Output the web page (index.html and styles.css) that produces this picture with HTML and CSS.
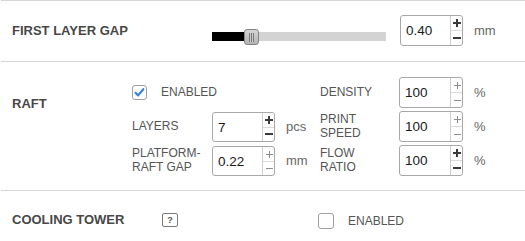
FILE: index.html
```html
<!DOCTYPE html>
<html lang="en">
<head>
    <meta charset="UTF-8">
    <meta name="viewport" content="width=device-width, initial-scale=1.0">
    <title>Print settings</title>
    <link rel="stylesheet" href="styles.css">
</head>
<body>
    <div class="panel">
        <section class="row row-gap">
            <h3 class="title title-wide">FIRST LAYER GAP</h3>
            <div class="slider">
                <div class="slider-fill"></div>
                <div class="slider-thumb"></div>
            </div>
            <div class="spin spin-shift">
                <span class="spin-value">0.40</span>
                <span class="spin-btns dark">
                    <span><svg width="8" height="8"><path d="M4 0v8M0 4h8"/></svg></span>
                    <span><svg width="8" height="8"><path d="M0 4h8"/></svg></span>
                </span>
            </div>
            <span class="unit">mm</span>
        </section>

        <section class="row row-raft">
            <h3 class="title title-raft">RAFT</h3>
            <label class="check check-raft">
                <svg class="box" width="15" height="15" viewBox="0 0 15 15">
                    <rect x="0.5" y="0.5" width="14" height="14" rx="2.5" fill="#fff" stroke="#a0a0a0"/>
                    <path d="M3.5 7.8l2.6 2.6 5.2-6.2" fill="none" stroke="#3584e4" stroke-width="2.2" stroke-linecap="round" stroke-linejoin="round"/>
                </svg>
                <span>ENABLED</span>
            </label>

            <span class="label col-d r1">DENSITY</span>
            <div class="spin col-e r1">
                <span class="spin-value">100</span>
                <span class="spin-btns">
                    <span><svg width="8" height="8"><path d="M4.5 1v7M1 4.5h7"/></svg></span>
                    <span><svg width="8" height="8"><path d="M1 4.5h7"/></svg></span>
                </span>
            </div>
            <span class="unit col-f r1">%</span>

            <span class="label col-a r2">LAYERS</span>
            <div class="spin col-b r2 low">
                <span class="spin-value">7</span>
                <span class="spin-btns dark">
                    <span><svg width="8" height="8"><path d="M4 0v8M0 4h8"/></svg></span>
                    <span><svg width="8" height="8"><path d="M0 4h8"/></svg></span>
                </span>
            </div>
            <span class="unit col-c r2">pcs</span>
            <span class="label col-d r2">PRINT SPEED</span>
            <div class="spin col-e r2">
                <span class="spin-value">100</span>
                <span class="spin-btns">
                    <span><svg width="8" height="8"><path d="M4.5 1v7M1 4.5h7"/></svg></span>
                    <span><svg width="8" height="8"><path d="M1 4.5h7"/></svg></span>
                </span>
            </div>
            <span class="unit col-f r2">%</span>

            <span class="label col-a r3">PLATFORM-RAFT GAP</span>
            <div class="spin col-b r3 low">
                <span class="spin-value">0.22</span>
                <span class="spin-btns">
                    <span><svg width="8" height="8"><path d="M4.5 1v7M1 4.5h7"/></svg></span>
                    <span><svg width="8" height="8"><path d="M1 4.5h7"/></svg></span>
                </span>
            </div>
            <span class="unit col-c r3">mm</span>
            <span class="label col-d r3">FLOW RATIO</span>
            <div class="spin col-e r3">
                <span class="spin-value">100</span>
                <span class="spin-btns dark">
                    <span><svg width="8" height="8"><path d="M4 0v8M0 4h8"/></svg></span>
                    <span><svg width="8" height="8"><path d="M0 4h8"/></svg></span>
                </span>
            </div>
            <span class="unit col-f r3">%</span>
        </section>

        <section class="row row-tower">
            <h3 class="title">COOLING TOWER</h3>
            <span class="help">?</span>
            <label class="check check-tower">
                <svg class="box" width="16" height="16" viewBox="0 0 16 16">
                    <rect x="0.5" y="0.5" width="15" height="15" rx="2.5" fill="#fff" stroke="#a0a0a0"/>
                </svg>
                <span>ENABLED</span>
            </label>
        </section>
    </div>
</body>
</html>
```

FILE: styles.css
```css
body {
    margin: 0;
    background: #fff;
    font-family: "Liberation Sans", Arial, sans-serif;
    color: #555;
}
.panel {
    border-top: 1px solid #d6d6d6;
    margin-left: 1px;
}
.row {
    display: grid;
    grid-template-columns: 120px 80px 63px 45px 79px 64px 1fr;
    align-items: center;
    padding-left: 11px;
    border-bottom: 1px solid #d6d6d6;
}
.row-gap {
    padding-top: 14px;
    padding-bottom: 16px;
    grid-template-rows: 30px;
}
.row-raft {
    padding-top: 15px;
    padding-bottom: 15px;
    grid-template-rows: 30px 30px 30px;
    row-gap: 4px;
}
.row-tower {
    padding-top: 13px;
    padding-bottom: 13px;
    grid-template-rows: 30px;
    border-bottom: none;
}
.title {
    margin: 0;
    font-size: 13px;
    font-weight: bold;
    color: #484848;
    grid-column: 1;
}
.title-wide {
    grid-column: 1 / 3;
}
.title-raft {
    grid-row: 1;
    align-self: start;
    padding-top: 19px;
}

/* slider */
.slider {
    grid-column: 3 / 6;
    position: relative;
    width: 174px;
    height: 9px;
    background: #d3d3d3;
    align-self: start;
    margin-top: 17px;
}
.slider-fill {
    width: 32px;
    height: 9px;
    background: #000;
}
.slider-thumb {
    position: absolute;
    left: 32px;
    top: -3px;
    width: 15px;
    height: 16px;
    box-sizing: border-box;
    border: 1px solid #858585;
    border-radius: 3px;
    background: linear-gradient(#d6d6d6, #b4b4b4);
    display: flex;
    align-items: center;
    justify-content: center;
}
.slider-thumb::before {
    content: "";
    width: 5px;
    height: 9px;
    background: repeating-linear-gradient(90deg, #7c7c7c 0 1px, #c8c8c8 1px 2px);
}

/* number box */
.spin {
    display: flex;
    width: 64px;
    height: 31px;
    box-sizing: border-box;
    border: 1px solid #a8a8a8;
    border-radius: 3px;
    background: #fff;
}
.spin-shift {
    grid-column: 6;
    margin-left: 1px;
    width: 63px;
}
.spin.low {
    margin-top: 2px;
    width: 63px;
    height: 30px;
}
.spin-value {
    flex: 1;
    display: flex;
    align-items: center;
    padding-left: 5px;
    font-size: 13.5px;
    color: #1a1a1a;
}
.spin-btns {
    width: 11px;
    border-left: 1px solid #cfcfcf;
    display: flex;
    flex-direction: column;
}
.spin-btns > span {
    flex: 1;
    display: flex;
    align-items: center;
    justify-content: center;
}
.spin-btns > span + span {
    border-top: 1px solid #dcdcdc;
}
.spin-btns svg {
    stroke: #8c8c8c;
    stroke-width: 1;
}
.spin-btns.dark svg {
    stroke: #3a3a3a;
    stroke-width: 2;
}

.label {
    font-size: 12px;
    line-height: 14px;
    width: 72px;
    color: #555;
}
.unit {
    font-size: 13px;
    color: #666;
    padding-left: 11px;
}

.col-a { grid-column: 2; }
.col-b { grid-column: 3; }
.col-c { grid-column: 4; }
.col-d { grid-column: 5; }
.col-e { grid-column: 6; }
.col-f { grid-column: 7; }
.r1 { grid-row: 1; }
.r2 { grid-row: 2; }
.r3 { grid-row: 3; }

/* checkboxes */
.check {
    display: flex;
    align-items: center;
    gap: 14px;
    font-size: 12px;
    color: #555;
}
.check .box {
    display: block;
}
.check-raft {
    grid-column: 2 / 5;
    grid-row: 1;
}
.check-tower {
    grid-column: 5 / 8;
    margin-left: -2px;
    margin-top: 3px;
}

.help {
    grid-column: 2;
    margin-left: 30px;
    width: 16px;
    height: 14px;
    box-sizing: border-box;
    border: 1px solid #7a7a7a;
    border-radius: 2px;
    font-size: 9px;
    font-weight: bold;
    color: #555;
    display: flex;
    align-items: center;
    justify-content: center;
    margin-top: 1px;
}
```
